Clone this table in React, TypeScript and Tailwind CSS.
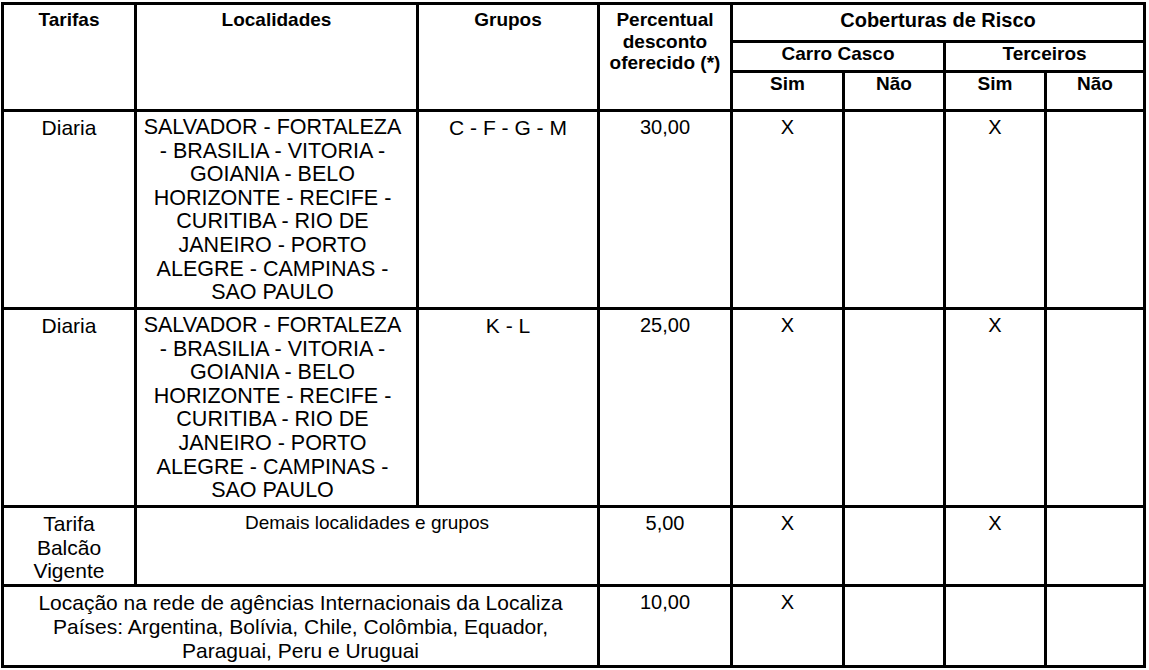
const cities = [
  'SALVADOR - FORTALEZA',
  '- BRASILIA - VITORIA -',
  'GOIANIA - BELO',
  'HORIZONTE - RECIFE -',
  'CURITIBA - RIO DE',
  'JANEIRO - PORTO',
  'ALEGRE - CAMPINAS -',
  'SAO PAULO',
]

const rows = [
  { tarifa: 'Diaria', grupos: 'C - F - G - M', pct: '30,00' },
  { tarifa: 'Diaria', grupos: 'K - L', pct: '25,00' },
]

const cell = 'border-[3px] border-black align-top text-center px-1'
const head = 'border-[3px] border-black align-top text-center font-bold text-[19px] leading-[21.5px]'

function Lines({ items }: { items: string[] }) {
  return (
    <>
      {items.map((t, i) => (
        <div key={i} className="whitespace-nowrap">
          {t}
        </div>
      ))}
    </>
  )
}

export default function App() {
  return (
    <div className="bg-white w-[1149px] h-[670px] pt-[2px] pl-[1px] text-black" style={{ fontFamily: '"Liberation Sans", Arial, sans-serif' }}>
      <table className="border-collapse table-fixed w-[1145px]">
        <colgroup>
          <col className="w-[133px]" />
          <col className="w-[282px]" />
          <col className="w-[181px]" />
          <col className="w-[133px]" />
          <col className="w-[112px]" />
          <col className="w-[101px]" />
          <col className="w-[101px]" />
          <col className="w-[99px]" />
        </colgroup>
        <thead>
          <tr className="h-[38px]">
            <th rowSpan={3} className={`${head} pt-[4px]`}>Tarifas</th>
            <th rowSpan={3} className={`${head} pt-[4px]`}>Localidades</th>
            <th rowSpan={3} className={`${head} pt-[4px]`}>Grupos</th>
            <th rowSpan={3} className={`${head} pt-[4px]`}>
              <Lines items={['Percentual', 'desconto', 'oferecido (*)']} />
            </th>
            <th colSpan={4} className={`${head} align-middle text-[20px] pt-[5px]`}>Coberturas de Risco</th>
          </tr>
          <tr className="h-[30px]">
            <th colSpan={2} className={`${head} align-middle`}>Carro Casco</th>
            <th colSpan={2} className={`${head} align-middle`}>Terceiros</th>
          </tr>
          <tr className="h-[39px]">
            <th className={`${head} align-middle`}>Sim</th>
            <th className={`${head} align-middle`}>Não</th>
            <th className={`${head} align-middle`}>Sim</th>
            <th className={`${head} align-middle`}>Não</th>
          </tr>
        </thead>
        <tbody className="text-[21px] leading-[23.6px]">
          {rows.map((r, i) => (
            <tr key={i} className="h-[198px]">
              <td className={`${cell} pt-[4px]`}>{r.tarifa}</td>
              <td className={`${cell} pt-[4px] pl-0 pr-[8px] text-[21.5px]`}>
                <Lines items={cities} />
              </td>
              <td className={`${cell} pt-[4px]`}>{r.grupos}</td>
              <td className={`${cell} pt-[4px] text-[20px]`}>{r.pct}</td>
              <td className={`${cell} pt-[4px] text-[20px]`}>X</td>
              <td className={cell}></td>
              <td className={`${cell} pt-[4px] text-[20px]`}>X</td>
              <td className={cell}></td>
            </tr>
          ))}
          <tr className="h-[79px]">
            <td className={`${cell} pt-[4px]`}>
              <Lines items={['Tarifa', 'Balcão', 'Vigente']} />
            </td>
            <td colSpan={2} className={`${cell} pt-[3px] text-[19px]`}>Demais localidades e grupos</td>
            <td className={`${cell} pt-[4px] text-[20px]`}>5,00</td>
            <td className={`${cell} pt-[4px] text-[20px]`}>X</td>
            <td className={cell}></td>
            <td className={`${cell} pt-[4px] text-[20px]`}>X</td>
            <td className={cell}></td>
          </tr>
          <tr className="h-[81px]">
            <td colSpan={3} className={`${cell} pt-[4px] leading-[24px]`}>
              <Lines
                items={[
                  'Locação na rede de agências Internacionais da Localiza',
                  'Países: Argentina, Bolívia, Chile, Colômbia, Equador,',
                  'Paraguai, Peru e Uruguai',
                ]}
              />
            </td>
            <td className={`${cell} pt-[4px] text-[20px]`}>10,00</td>
            <td className={`${cell} pt-[4px] text-[20px]`}>X</td>
            <td className={cell}></td>
            <td className={cell}></td>
            <td className={cell}></td>
          </tr>
        </tbody>
      </table>
    </div>
  )
}
